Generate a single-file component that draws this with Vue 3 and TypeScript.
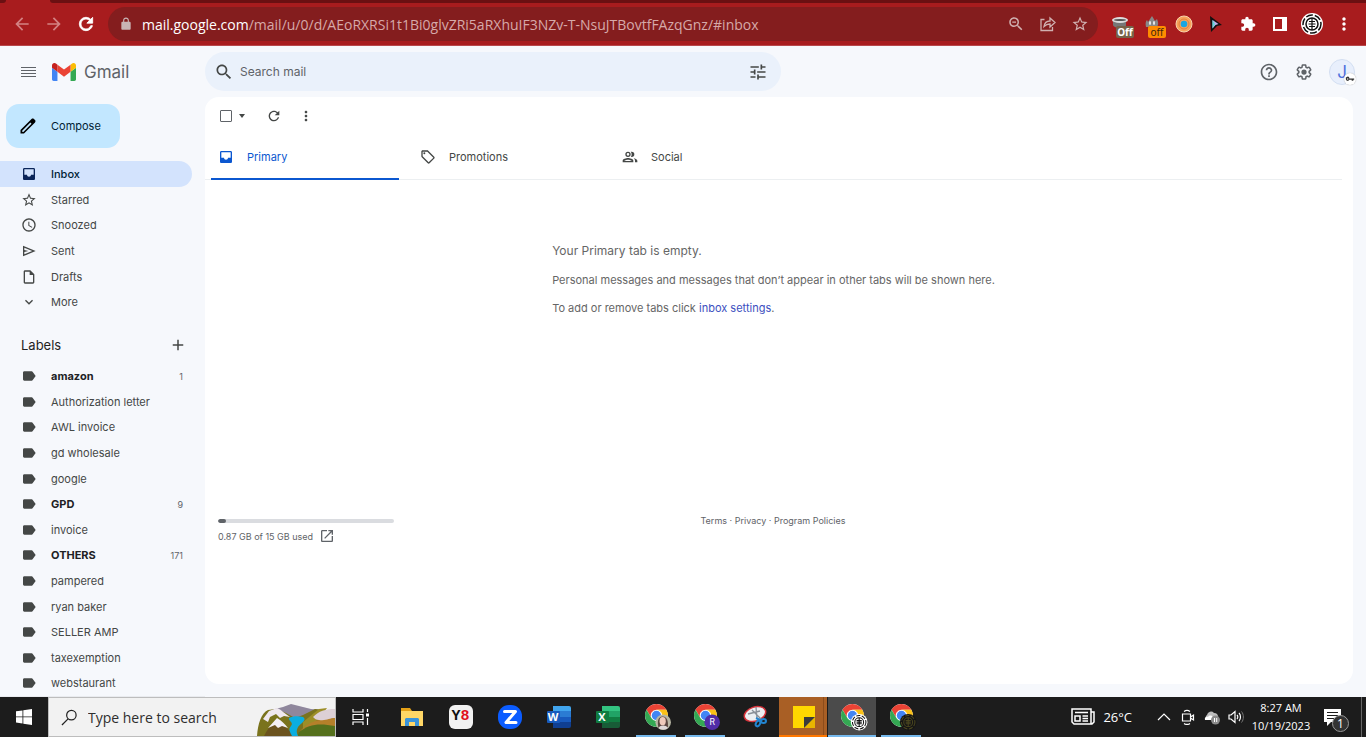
<script setup lang="ts">
import { ref } from 'vue'

interface NavItem { name: string; icon: string; active?: boolean }
interface Label { name: string; count?: number }
interface TaskApp { name: string; kind: string; state?: 'open' | 'active' | 'alert' }

const icons: Record<string, string> = {
  back: 'M20 11H7.83l5.59-5.59L12 4l-8 8 8 8 1.41-1.41L7.83 13H20v-2z',
  forward: 'M4 11h12.17l-5.59-5.59L12 4l8 8-8 8-1.41-1.41L16.17 13H4v-2z',
  reload: 'M17.65 6.35C16.2 4.9 14.21 4 12 4c-4.42 0-7.99 3.58-7.99 8s3.57 8 7.99 8c3.73 0 6.84-2.55 7.73-6h-2.08c-.82 2.33-3.04 4-5.65 4-3.31 0-6-2.69-6-6s2.69-6 6-6c1.66 0 3.14.69 4.22 1.78L13 11h7V4l-2.35 2.35z',
  lock: 'M18 8h-1V6c0-2.76-2.24-5-5-5S7 3.24 7 6v2H6c-1.1 0-2 .9-2 2v10c0 1.1.9 2 2 2h12c1.1 0 2-.9 2-2V10c0-1.1-.9-2-2-2zM9 8V6c0-1.66 1.34-3 3-3s3 1.34 3 3v2H9z',
  zoomOut: 'M15.5 14h-.79l-.28-.27C15.41 12.59 16 11.11 16 9.5 16 5.91 13.09 3 9.5 3S3 5.91 3 9.5 5.91 16 9.5 16c1.61 0 3.09-.59 4.23-1.57l.27.28v.79l5 4.99L20.49 19l-4.99-5zm-6 0C7.01 14 5 11.99 5 9.5S7.01 5 9.5 5 14 7.01 14 9.5 11.99 14 9.5 14zM7 8.8h5v1.5H7z',
  search: 'M15.5 14h-.79l-.28-.27C15.41 12.59 16 11.11 16 9.5 16 5.91 13.09 3 9.5 3S3 5.91 3 9.5 5.91 16 9.5 16c1.61 0 3.09-.59 4.23-1.57l.27.28v.79l5 4.99L20.49 19l-4.99-5zm-6 0C7.01 14 5 11.99 5 9.5S7.01 5 9.5 5 14 7.01 14 9.5 11.99 14 9.5 14z',
  star: 'M22 9.24l-7.19-.62L12 2 9.19 8.63 2 9.24l5.46 4.73L5.82 21 12 17.27 18.18 21l-1.63-7.03L22 9.24zM12 15.4l-3.76 2.27 1-4.28-3.32-2.88 4.38-.38L12 6.1l1.71 4.04 4.38.38-3.32 2.88 1 4.28L12 15.4z',
  puzzle: 'M20.5 11H19V7c0-1.1-.9-2-2-2h-4V3.5C13 2.12 11.88 1 10.5 1S8 2.12 8 3.5V5H4c-1.1 0-1.99.9-1.99 2v3.8H3.5c1.49 0 2.7 1.21 2.7 2.7s-1.21 2.7-2.7 2.7H2V20c0 1.1.9 2 2 2h3.8v-1.5c0-1.49 1.21-2.7 2.7-2.7 1.49 0 2.7 1.21 2.7 2.7V22H17c1.1 0 2-.9 2-2v-4h1.5c1.38 0 2.5-1.12 2.5-2.5S21.88 11 20.5 11z',
  dots: 'M12 8c1.1 0 2-.9 2-2s-.9-2-2-2-2 .9-2 2 .9 2 2 2zm0 2c-1.1 0-2 .9-2 2s.9 2 2 2 2-.9 2-2-.9-2-2-2zm0 6c-1.1 0-2 .9-2 2s.9 2 2 2 2-.9 2-2-.9-2-2-2z',
  tune: 'M3 17v2h6v-2H3zM3 5v2h10V5H3zm10 16v-2h8v-2h-8v-2h-2v6h2zM7 9v2H3v2h4v2h2V9H7zm14 4v-2H11v2h10zm-6-4h2V7h4V5h-4V3h-2v6z',
  help: 'M11 18h2v-2h-2v2zm1-16C6.48 2 2 6.48 2 12s4.48 10 10 10 10-4.48 10-10S17.52 2 12 2zm0 18c-4.41 0-8-3.59-8-8s3.59-8 8-8 8 3.59 8 8-3.59 8-8 8zm0-14c-2.21 0-4 1.79-4 4h2c0-1.1.9-2 2-2s2 .9 2 2c0 2-3 1.75-3 5h2c0-2.25 3-2.5 3-5 0-2.21-1.79-4-4-4z',
  gear: 'M13.85 22.25h-3.7c-.74 0-1.36-.54-1.45-1.27l-.27-1.89c-.27-.14-.53-.29-.79-.46l-1.8.72c-.7.26-1.47-.03-1.81-.65L2.2 15.53c-.35-.66-.2-1.44.36-1.88l1.53-1.19c-.01-.15-.02-.3-.02-.46 0-.15.01-.31.02-.46l-1.52-1.19c-.59-.45-.74-1.26-.37-1.88l1.85-3.19c.34-.62 1.11-.9 1.79-.63l1.81.73c.26-.17.52-.32.78-.46l.27-1.91c.09-.7.71-1.25 1.44-1.25h3.7c.74 0 1.36.54 1.45 1.27l.27 1.89c.27.14.53.29.79.46l1.8-.72c.71-.26 1.48.03 1.82.65l1.84 3.18c.36.66.2 1.44-.36 1.88l-1.52 1.19c.01.15.02.3.02.46s-.01.31-.02.46l1.52 1.19c.56.45.72 1.23.37 1.86l-1.86 3.22c-.34.62-1.11.9-1.8.63l-1.8-.72c-.26.17-.52.32-.78.46l-.27 1.91c-.1.68-.72 1.22-1.46 1.22zm-3.23-2h2.76l.37-2.55.53-.22c.44-.18.88-.44 1.34-.78l.45-.34 2.38.96 1.38-2.4-2.03-1.58.07-.56c.03-.26.06-.51.06-.78s-.03-.53-.06-.78l-.07-.56 2.03-1.58-1.39-2.4-2.39.96-.45-.35c-.42-.32-.87-.58-1.33-.77l-.52-.22-.37-2.55h-2.76l-.37 2.55-.53.21c-.44.19-.88.44-1.34.79l-.45.33-2.38-.95-1.39 2.39 2.03 1.58-.07.56a7 7 0 0 0-.06.79c0 .26.02.53.06.78l.07.56-2.03 1.58 1.38 2.4 2.39-.96.45.35c.43.33.86.58 1.33.77l.53.22.38 2.55zM12 8.5a3.5 3.5 0 1 0 0 7 3.5 3.5 0 0 0 0-7z',
  pencil: 'M20.41 4.94l-1.35-1.35c-.78-.78-2.05-.78-2.83 0L3 16.82V21h4.18L20.41 7.77c.79-.78.79-2.05 0-2.83zm-14 14.12L5 19v-1.36l9.82-9.82 1.41 1.41-9.82 9.83z',
  inbox: 'M19 3H5c-1.1 0-2 .9-2 2v14c0 1.1.9 2 2 2h14c1.1 0 2-.9 2-2V5c0-1.1-.9-2-2-2zm0 10h-4c0 1.66-1.35 3-3 3s-3-1.34-3-3H5V5h14v8z',
  clock: 'M11.99 2C6.47 2 2 6.48 2 12s4.47 10 9.99 10C17.52 22 22 17.52 22 12S17.52 2 11.99 2zM12 20c-4.42 0-8-3.58-8-8s3.58-8 8-8 8 3.58 8 8-3.58 8-8 8zm.5-13H11v6l5.25 3.15.75-1.23-4.5-2.67z',
  send: 'M3 20V4l19 8-19 8zm2-3l11.85-5L5 7v3.5l6 1.5-6 1.5V17z',
  draft: 'M14 2H6c-1.1 0-2 .9-2 2v16c0 1.1.89 2 1.99 2H18c1.1 0 2-.9 2-2V8l-6-6zM6 20V4h7v5h5v11H6z',
  more: 'M16.59 8.59L12 13.17 7.41 8.59 6 10l6 6 6-6z',
  label: 'M17.63 5.84C17.27 5.33 16.67 5 16 5L5 5.01C3.9 5.01 3 5.9 3 7v10c0 1.1.9 1.99 2 1.99L16 19c.67 0 1.27-.33 1.63-.84L22 12l-4.37-6.16z',
  plus: 'M19 13h-6v6h-2v-6H5v-2h6V5h2v6h6v2z',
  tag: 'M21.41 11.58l-9-9C12.05 2.22 11.55 2 11 2H4c-1.1 0-2 .9-2 2v7c0 .55.22 1.05.59 1.42l9 9c.36.36.86.58 1.41.58s1.05-.22 1.41-.59l7-7c.37-.36.59-.86.59-1.41s-.23-1.06-.59-1.42zM13 20.01L4 11V4h7v-.01l9 9-7 7.02zM6.5 5a1.5 1.5 0 1 0 0 3 1.5 1.5 0 0 0 0-3z',
  people: 'M9 4a4 4 0 1 0 0 8 4 4 0 0 0 0-8zm0 2a2 2 0 1 1 0 4 2 2 0 0 1 0-4zM14.5 4c-.5 0-.9.1-1.3.2.8 1 1.3 2.3 1.3 3.8s-.5 2.8-1.3 3.8c.4.1.8.2 1.3.2a4 4 0 0 0 0-8zM9 13.5c-2.7 0-8 1.4-8 4.1V20h16v-2.4c0-2.7-5.3-4.1-8-4.1zM3.500 18c.5-1 3.300-2 5.500-2s5 1 5.500 2zM17.500 13.800c1.200.9 2 2.200 2 3.800V20H23v-2.400c0-2-2.900-3.300-5.500-3.800z',
  external: 'M19 19H5V5h7V3H5c-1.11 0-2 .9-2 2v14c0 1.1.89 2 2 2h14c1.1 0 2-.9 2-2v-7h-2v7zM14 3v2h3.590l-9.830 9.830 1.410 1.410L19 6.410V10h2V3h-7z',
}

const folders: NavItem[] = [
  { name: 'Inbox', icon: 'inbox', active: true },
  { name: 'Starred', icon: 'star' },
  { name: 'Snoozed', icon: 'clock' },
  { name: 'Sent', icon: 'send' },
  { name: 'Drafts', icon: 'draft' },
  { name: 'More', icon: 'more' },
]

const labels: Label[] = [
  { name: 'amazon', count: 1 },
  { name: 'Authorization letter' },
  { name: 'AWL invoice' },
  { name: 'gd wholesale' },
  { name: 'google' },
  { name: 'GPD', count: 9 },
  { name: 'invoice' },
  { name: 'OTHERS', count: 171 },
  { name: 'pampered' },
  { name: 'ryan baker' },
  { name: 'SELLER AMP' },
  { name: 'taxexemption' },
  { name: 'webstaurant' },
]

const tabs = [
  { name: 'Primary', icon: 'inbox' },
  { name: 'Promotions', icon: 'tag' },
  { name: 'Social', icon: 'people' },
]
const activeTab = ref('Primary')
const query = ref('')
const taskQuery = ref('')
const selectAll = ref(false)
const storage = { used: 0.87, total: 15 }

const apps: TaskApp[] = [
  { name: 'Task View', kind: 'taskview' },
  { name: 'File Explorer', kind: 'explorer' },
  { name: 'Y8', kind: 'y8' },
  { name: 'Zoom', kind: 'zoom' },
  { name: 'Word', kind: 'word' },
  { name: 'Excel', kind: 'excel' },
  { name: 'Chrome', kind: 'chrome-photo', state: 'open' },
  { name: 'Chrome R', kind: 'chrome-r', state: 'open' },
  { name: 'Snipping Tool', kind: 'snip' },
  { name: 'Sticky Notes', kind: 'sticky', state: 'alert' },
  { name: 'Chrome Element', kind: 'chrome-white', state: 'active' },
  { name: 'Chrome Dark', kind: 'chrome-black', state: 'open' },
]
</script>

<template>
  <div class="screen">
    <header class="browser">
      <div class="tabstrip"><i class="strip-left"></i><i class="strip-right"></i></div>
      <div class="toolbar">
        <button class="slot dim" aria-label="Back"><svg class="i20" viewBox="0 0 24 24"><path :d="icons.back" /></svg></button>
        <button class="slot dim" aria-label="Forward"><svg class="i20" viewBox="0 0 24 24"><path :d="icons.forward" /></svg></button>
        <button class="slot" aria-label="Reload"><svg class="i20 bold" viewBox="0 0 24 24"><path :d="icons.reload" /></svg></button>
        <div class="omnibox">
          <svg class="i14 lock" viewBox="0 0 24 24"><path :d="icons.lock" /></svg>
          <div class="url" role="textbox" aria-label="Address"><b>mail.google.com</b>/mail/u/0/d/AEoRXRSi1t1Bi0glvZRi5aRXhuIF3NZv-T-NsuJTBovtfFAzqGnz/#inbox</div>
          <button class="slot pale" aria-label="Zoom"><svg class="i18" viewBox="0 0 24 24"><path :d="icons.zoomOut" /></svg></button>
          <button class="slot pale" aria-label="Share">
            <svg class="i18" viewBox="0 0 18 18"><path class="line" d="M5.500 4.500H2v11h11.500V12M5 11.500C5.500 8 8 6 11 6V3l5 4.500-5 4.500V9C8.500 9 6.500 10 5 11.500z" /></svg>
          </button>
          <button class="slot pale" aria-label="Bookmark"><svg class="i18" viewBox="0 0 24 24"><path :d="icons.star" /></svg></button>
        </div>
        <div class="extensions">
          <button class="slot badged" aria-label="Blocker off">
            <svg class="i20" viewBox="0 0 20 20"><path d="M3 6v5c1 4 13 4 13 0V6z" fill="#777" /><ellipse cx="10" cy="6" rx="8" ry="3" fill="#ddd" /><ellipse cx="10" cy="6" rx="6" ry="1" fill="#555" /></svg>
            <span class="badge brown">Off</span>
          </button>
          <button class="slot badged" aria-label="Ghost off">
            <svg class="i20" viewBox="0 0 20 20"><path d="M4 13c-1-4 0-6 1-7l1 2 4-6 3 5 2-2c1 3 2 5 0 8z" fill="#888" /><ellipse cx="8" cy="9" rx="1" ry="2" fill="#eee" /><ellipse cx="12" cy="9" rx="1" ry="2" fill="#eee" /></svg>
            <span class="badge orange">off</span>
          </button>
          <button class="slot" aria-label="Target extension">
            <svg class="i18" viewBox="0 0 18 18"><circle cx="9" cy="9" r="8" fill="#f7a35b" stroke="#f8d4ac" /><circle cx="9" cy="9" r="5" fill="none" stroke="#e0803c" /><circle cx="9" cy="9" r="3.300" fill="#17a6e2" /></svg>
          </button>
          <button class="slot" aria-label="Cursor extension">
            <svg class="i18" viewBox="0 0 18 18"><path d="M3 1l12 9-5 1-6 6z" fill="#111" /><path d="M5.500 5l6 4-3 1-3 3.500z" fill="#c5b0ee" /><path d="M5.500 5v8.500L8 9z" fill="#62dbd9" /></svg>
          </button>
          <button class="slot" aria-label="Extensions"><svg class="i16" viewBox="0 0 24 24"><path :d="icons.puzzle" /></svg></button>
          <button class="slot" aria-label="Side panel"><svg class="i14" viewBox="0 0 14 14"><path fill-rule="evenodd" d="M0 0h14v14H0zM2 2v10h7V2z" /></svg></button>
          <button class="slot" aria-label="Profile">
            <svg class="i22" viewBox="0 0 22 22"><circle cx="11" cy="11" r="11" fill="#fff" /><circle cx="11" cy="11" r="9" fill="none" stroke="#111" stroke-width="1.500" stroke-dasharray="7 2" /><circle cx="11" cy="11" r="6" fill="none" stroke="#111" stroke-width="1.500" /><path d="M11 5v12M8 8.500h6M7.500 11h7M8 13.500h6" stroke="#111" stroke-width="1.200" /></svg>
          </button>
          <button class="slot" aria-label="Menu"><svg class="i20" viewBox="0 0 24 24"><path :d="icons.dots" /></svg></button>
        </div>
      </div>
    </header>

    <div class="gmail">
      <div class="topbar">
        <div class="brand">
          <button class="menu" aria-label="Main menu"><svg class="i16" viewBox="0 0 16 16"><path d="M0 3h15v1H0zM0 6h15v1H0zM0 9h15v1H0zM0 12h15v1H0z" /></svg></button>
          <a class="logo" href="#inbox">
            <svg viewBox="52 42 88 66"><path fill="#4285f4" d="M58 108h14V74L52 59v43c0 3.320 2.690 6 6 6" /><path fill="#34a853" d="M120 108h14c3.320 0 6-2.690 6-6V59l-20 15" /><path fill="#fbbc04" d="M120 48v26l20-15v-8c0-7.420-8.470-11.650-14.400-7.200" /><path fill="#ea4335" d="M72 74V48l24 18 24-18v26L96 92" /><path fill="#c5221f" d="M52 51v8l20 15V48l-5.600-4.200c-5.940-4.450-14.400-.22-14.400 7.200" /></svg>
            <span>Gmail</span>
          </a>
        </div>
        <form class="search" role="search" @submit.prevent>
          <button class="plain" aria-label="Search"><svg class="i20" viewBox="0 0 24 24"><path :d="icons.search" /></svg></button>
          <input v-model="query" type="text" placeholder="Search mail" aria-label="Search mail" />
          <button class="plain" type="button" aria-label="Search options"><svg class="i20" viewBox="0 0 24 24"><path :d="icons.tune" /></svg></button>
        </form>
        <div class="account">
          <button class="tool" aria-label="Support"><svg class="i20" viewBox="0 0 24 24"><path :d="icons.help" /></svg></button>
          <button class="tool" aria-label="Settings"><svg class="i18" viewBox="0 0 24 24"><path :d="icons.gear" /></svg></button>
          <button class="avatar" aria-label="Account">J
            <span class="key"><svg viewBox="0 0 12 12"><path d="M1 6a2.200 2.200 0 1 1 4.300-.7H11V7h-1v1H8V7H5.200A2.200 2.200 0 0 1 1 6zm1.500 0a.8.8 0 1 0 1.600 0 .8.8 0 0 0-1.600 0z" /></svg></span>
          </button>
        </div>
      </div>

      <div class="body">
        <aside class="side">
          <button class="compose"><svg class="i20" viewBox="0 0 24 24"><path :d="icons.pencil" /></svg>Compose</button>
          <ul class="rows">
            <li v-for="f in folders" :key="f.name">
              <a href="#inbox" class="row" :class="{ active: f.active }"><svg class="i16" viewBox="0 0 24 24"><path :d="icons[f.icon]" /></svg><span>{{ f.name }}</span></a>
            </li>
          </ul>
          <div class="labels-head"><h2>Labels</h2><button class="plain" aria-label="Create new label"><svg class="i18" viewBox="0 0 24 24"><path :d="icons.plus" /></svg></button></div>
          <ul class="rows">
            <li v-for="l in labels" :key="l.name">
              <a href="#label" class="row" :class="{ unread: l.count }"><svg class="i16" viewBox="0 0 24 24"><path :d="icons.label" /></svg><span>{{ l.name }}</span><em v-if="l.count">{{ l.count }}</em></a>
            </li>
          </ul>
        </aside>

        <main class="panel">
          <div class="actions">
            <label class="check"><input v-model="selectAll" type="checkbox" aria-label="Select all" /></label>
            <button class="caret" aria-label="Select"><svg viewBox="0 0 8 4"><path d="M1 0h6L4 4z" /></svg></button>
            <button class="action" aria-label="Refresh"><svg class="i16" viewBox="0 0 24 24"><path :d="icons.reload" /></svg></button>
            <button class="action" aria-label="More"><svg class="i16" viewBox="0 0 24 24"><path :d="icons.dots" /></svg></button>
          </div>
          <div class="tabs" role="tablist">
            <button v-for="t in tabs" :key="t.name" class="tab" role="tab" :aria-selected="activeTab === t.name" :class="{ on: activeTab === t.name }" @click="activeTab = t.name">
              <svg class="i16" viewBox="0 0 24 24"><path :d="icons[t.icon]" /></svg>{{ t.name }}
            </button>
          </div>
          <section class="empty">
            <div>
              <p class="lead">Your Primary tab is empty.</p>
              <p>Personal messages and messages that don’t appear in other tabs will be shown here.</p>
              <p>To add or remove tabs click <a href="#settings">inbox settings</a>.</p>
            </div>
          </section>
          <footer class="foot">
            <div class="storage">
              <div class="meter"><i :style="{ width: (storage.used / storage.total * 80) + '%' }"></i></div>
              <a href="#storage">{{ storage.used }} GB of {{ storage.total }} GB used <svg class="i16" viewBox="0 0 24 24"><path :d="icons.external" /></svg></a>
            </div>
            <div class="legal"><a href="#terms">Terms</a> · <a href="#privacy">Privacy</a> · <a href="#policies">Program Policies</a></div>
          </footer>
        </main>
      </div>
    </div>

    <footer class="taskbar">
      <button class="start" aria-label="Start"><svg class="i16" viewBox="0 0 16 16"><path d="M0 2.300l6.500-.9v6.100H0zM7.300 1.300L16 0v7.500H7.300zM0 8.300h6.500v6.200L0 13.600zM7.300 8.300H16V16l-8.700-1.300z" /></svg></button>
      <label class="tasksearch">
        <svg class="glass" viewBox="0 0 18 18"><circle cx="11" cy="6.500" r="5" /><path d="M7.500 10.500L1 17" /></svg>
        <input v-model="taskQuery" type="text" placeholder="Type here to search" aria-label="Type here to search" />
        <svg class="scene" viewBox="0 0 78 32">
          <path d="M14 6l12-3 8-3 8 2 12 3 10 1 8 5v6H14z" fill="#8f879c" />
          <path d="M0 32C1 20 4 9 11 6l8-1 10 4 9 5 8-3 12-6 10 1 10 4v22z" fill="#7a731d" />
          <path d="M46 18L62 5l8-1-6 8-18 18z" fill="#9c8e27" />
          <path d="M40 32c6-12 20-18 38-18v18z" fill="#b5802a" />
          <path d="M42 28c10-8 20-9 36-6v10H40z" fill="#55701c" />
          <path d="M56 13c6-6 12-8 22-8v9c-6 0-8 3-16 2-3 0-4-1-6-3z" fill="#ddd0d6" />
          <path d="M6 15l6-8 8-3c5 2 8 6 13 9l-6-1-4 2-4-4-6 3-2 5z" fill="#efe8ef" />
          <path d="M7 32c4-8 8-12 13-17 6 6 12 10 17 17z" fill="#6b531e" />
          <path d="M11 24l9-10c5 3 8 6 11 10l-6-2-4 2-3-3z" fill="#f4f0f5" />
          <path d="M46 13c-5-1-10-1-14 1-1 3 5 4 2 8-3 3-1 6 1 10h6c-3-6 0-10 4-13 2-2 4-4 1-6z" fill="#0aaee0" />
        </svg>
      </label>
      <nav class="apps">
        <button v-for="a in apps" :key="a.name" class="app" :class="a.state" :aria-label="a.name">
          <svg v-if="a.kind === 'taskview'" class="i18" viewBox="0 0 18 18"><path class="tline" d="M1 1v3h10V1M1 17v-3h10v3M1 6.500h10v5H1zM15.500 1v3M15.500 10v7" /><path d="M14 5.500h3v3h-3z" fill="#fff" /></svg>
          <svg v-else-if="a.kind === 'explorer'" class="i24" viewBox="0 0 24 24"><path d="M1 3h9l2 3h11v14H1z" fill="#e5a117" /><path d="M1 6h22v15H1z" fill="#ffd766" /><path d="M5 21v-7l1-1h12l1 1v7h-4v-4H9v4z" fill="#3b94d9" /></svg>
          <span v-else-if="a.kind === 'y8'" class="tile y8">Y<b>8</b></span>
          <svg v-else-if="a.kind === 'zoom'" class="i24" viewBox="0 0 24 24"><rect width="24" height="24" rx="11" fill="#0b5cff" /><path d="M6.500 6.500h11L8 17.500h10" fill="none" stroke="#fff" stroke-width="3" stroke-linejoin="round" stroke-linecap="round" /></svg>
          <span v-else-if="a.kind === 'word'" class="office word"><b>W</b></span>
          <span v-else-if="a.kind === 'excel'" class="office excel"><b>X</b></span>
          <svg v-else-if="a.kind === 'snip'" class="i24" viewBox="0 0 24 24"><ellipse cx="12" cy="9" rx="11" ry="7" transform="rotate(-18 12 9)" fill="#eceff2" stroke="#d6323a" stroke-width="1.500" /><path d="M5 9l12-3M13 2l1 12M9 5l9 9" stroke="#8a9098" stroke-width="1.300" /><g fill="none" stroke="#2385d0" stroke-width="2"><ellipse cx="15" cy="18.500" rx="2" ry="3" transform="rotate(30 15 18.500)" /><ellipse cx="20.500" cy="16" rx="2.500" ry="2" /><path d="M13 13l6 3" /></g></svg>
          <svg v-else-if="a.kind === 'sticky'" class="i22" viewBox="0 0 22 22"><path d="M0 0h22v22H0z" fill="#ffd700" /><path d="M22 11v11H11z" fill="#e9b500" /><path d="M11 11h11L11 22z" fill="#3b3b3b" /></svg>
          <svg v-else class="chrome" viewBox="0 0 54 54">
            <circle cx="24" cy="24" r="22" fill="#fff" />
            <path fill="#ea4335" d="M4.950 13A22 22 0 0 1 43.050 13H24A11 11 0 0 0 14.470 29.500z" />
            <path fill="#fbc116" d="M43.050 13A22 22 0 0 1 24 46L33.530 29.500A11 11 0 0 0 24 13z" />
            <path fill="#34a853" d="M24 46A22 22 0 0 1 4.950 13L14.470 29.500A11 11 0 0 0 33.530 29.500z" />
            <circle cx="24" cy="24" r="9" fill="#4285f4" />
            <g v-if="a.kind === 'chrome-photo'"><circle cx="37" cy="37" r="15" fill="#b7b6a4" /><path d="M28 48c-3-12-1-22 8-22s11 10 10 21z" fill="#5a4640" /><ellipse cx="36" cy="35" rx="6" ry="8" fill="#eecabb" /><path d="M28 48c4-6 14-6 18 0-5 4-13 4-18 0z" fill="#ded8d8" /></g>
            <g v-else-if="a.kind === 'chrome-r'"><circle cx="37" cy="37" r="15" fill="#512da8" /><text x="37" y="43" text-anchor="middle" fill="#fff" font-size="17" font-family="Roboto, sans-serif">R</text></g>
            <g v-else :class="a.kind"><circle class="disc" cx="37" cy="37" r="16" /><g class="marks"><circle cx="37" cy="37" r="13" stroke-dasharray="8 3" /><circle cx="37" cy="37" r="8.500" /><path d="M37 29v16M32 34h10M32 37h10M32 40h10" /></g></g>
          </svg>
        </button>
      </nav>
      <div class="tray">
        <button class="weather"><svg viewBox="0 0 24 18" stroke="#fff" stroke-width="1.500"><path d="M1 1h19v15H3l-2-2zM20 4h3v10l-2 2h-2M4 4.500h13M4 8h5v5H4zM11.500 8H17M11.500 10.500H17M11.500 13H17" /></svg>26°C</button>
        <button class="trayicon" aria-label="Show hidden icons"><svg class="i14" viewBox="0 0 14 14"><path class="tline" d="M1 10l6-6 6 6" /></svg></button>
        <button class="trayicon" aria-label="Meet Now"><svg class="i16" viewBox="0 0 16 16"><path class="tline" d="M2.500 5h8v7h-8zM10.500 8l3-2v5l-3-2M4 2.500c2-1.500 4-1.500 6 0M4 14.500c2 1.300 4 1.300 6 0" /></svg></button>
        <button class="trayicon" aria-label="OneDrive"><svg class="i16" viewBox="0 0 16 16"><path d="M3 11a3 3 0 0 1 0-5 4 4 0 0 1 7-2 4 4 0 0 1 4 4v3z" fill="#bdbdbd" /><path d="M1 11c-1-3 2-4 3-3 2-3 6-1 6 3z" fill="#fff" /><circle cx="11.500" cy="11" r="4.500" fill="#8b8b8b" /><path d="M10.500 9v4M12.700 9v4" stroke="#fff" /></svg></button>
        <button class="trayicon" aria-label="Volume"><svg class="i16" viewBox="0 0 16 16"><path class="tline" d="M1 6h2l4-3.500v11L3 10H1zM9 6c1 1 1 3 0 4M11 4c2 2 2 6 0 8" /><path d="M13.500 2.500c2.500 3 2.500 8 0 11" fill="none" stroke="#777" /></svg></button>
        <button class="datetime"><time>8:27 AM</time><time>10/19/2023</time></button>
        <button class="notice" aria-label="Notifications"><svg viewBox="0 0 17 17"><path d="M0 0h17v13H7l-4 4v-4H0z" fill="#fff" /><path d="M3 3.500h11M3 6.500h11M3 9.500h7" stroke="#1c1c1c" /></svg><span>1</span></button>
        <i class="peek"></i>
      </div>
    </footer>
  </div>
</template>

<style>
html, body { margin: 0; }
</style>

<style scoped>
* { box-sizing: border-box; }
.screen { display: flex; flex-direction: column; height: 100vh; overflow: hidden; font-family: Inter, Roboto, "Liberation Sans", sans-serif; font-size: 11px; color: #444746; background: #f6f8fc; }
button { border: 0; padding: 0; margin: 0; background: none; font: inherit; color: inherit; display: flex; align-items: center; justify-content: center; }
a { color: inherit; text-decoration: none; }
svg { fill: currentColor; flex: none; display: block; }
ul { list-style: none; margin: 0; padding: 0; }
input { font: inherit; border: 0; outline: 0; background: none; padding: 0; min-width: 0; }
.i14 { width: 14px; height: 14px; }
.i16 { width: 16px; height: 16px; }
.i18 { width: 18px; height: 18px; }
.i20 { width: 20px; height: 20px; }
.i22 { width: 22px; height: 22px; }
.i24 { width: 24px; height: 24px; }

.browser { background: #a81c1e; color: #fff; flex: none; border-bottom: 1px solid #b8474b; }
.tabstrip { display: flex; height: 3px; justify-content: space-between; }
.strip-left { width: 6px; background: #6b1012; border-bottom-right-radius: 3px; }
.strip-right { flex: 1; margin-left: 44px; background: #6b1012; border-bottom-left-radius: 3px; }
.toolbar { display: flex; align-items: center; height: 42px; padding: 0 6px; }
.slot { width: 32px; height: 32px; flex: none; }
.dim { color: #d38283; }
.bold path { stroke: #fff; }
.omnibox { display: flex; align-items: center; flex: 1; min-width: 0; height: 34px; margin: 0 6px; padding: 0 2px 0 11px; border-radius: 17px; background: #841d1e; }
.lock { color: #c9b4b4; }
.url { flex: 1; min-width: 0; margin-left: 9px; overflow: hidden; white-space: nowrap; font-family: "Open Sans", "Noto Sans", sans-serif; font-size: 14px; color: #d6a9a9; }
.url b { font-weight: 400; color: #fff; }
.pale { color: #d0b0b0; }
.line { fill: none; stroke: currentColor; stroke-width: 1.300; }
.extensions { display: flex; }
.badged { position: relative; }
.badge { position: absolute; left: 12px; top: 18px; height: 12px; width: 18px; border-radius: 2px; font: 700 10px/12px "Noto Sans", sans-serif; text-align: center; }
.brown { background: #77634a; color: #fff; }
.orange { background: #ff8c00; color: #3d2410; font-weight: 400; }

.gmail { display: flex; flex-direction: column; flex: 1; min-height: 0; }
.topbar { display: flex; align-items: center; height: 51px; flex: none; }
.brand { display: flex; align-items: center; width: 205px; flex: none; padding-left: 21px; }
.menu { width: 16px; height: 24px; color: #5f6368; }
.logo { display: flex; align-items: center; gap: 8px; margin-left: 15px; font-size: 17px; color: #5f6368; }
.logo svg { width: 24px; height: 18px; }
.search { display: flex; align-items: center; flex: 0 1 576px; height: 39px; padding: 0 13px 0 9px; border-radius: 20px; background: #eaf1fb; }
.search input { flex: 1; margin-left: 6px; font-size: 12px; }
.search input::placeholder { color: #5f6368; opacity: 1; }
.account { display: flex; align-items: center; margin-left: auto; padding-right: 11px; color: #5f6368; }
.tool { width: 35px; height: 35px; }
.avatar { position: relative; width: 26px; height: 26px; margin-left: 8px; border-radius: 50%; border: 1px solid #d3dff2; background: #e8effc; color: #4c6fdc; font-size: 17px; }
.key { position: absolute; right: -2px; bottom: -1px; width: 12px; height: 12px; border-radius: 50%; background: #fff; color: #333; box-shadow: 0 0 1px #999; display: flex; align-items: center; justify-content: center; }
.key svg { width: 10px; height: 10px; }

.body { display: flex; flex: 1; min-height: 0; }
.side { width: 205px; flex: none; padding-top: 7px; overflow: hidden; border-bottom: 1px solid #e9ebef; }
.compose { width: 114px; height: 44px; margin: 0 0 13px 6px; padding-left: 12px; gap: 13px; justify-content: flex-start; border-radius: 13px; background: #c2e7ff; color: #001d35; }
.compose svg { color: #000; }
.rows { display: grid; grid-auto-rows: 26px 25px 26px 26px 25px; }
.row { display: flex; align-items: center; height: 100%; width: 192px; padding: 0 9px 0 21px; border-radius: 0 13px 13px 0; }
.row span { margin-left: 14px; flex: 1; }
.row em { font-style: normal; font-weight: 400; font-size: 9px; color: #5f6368; }
.active { background: #d3e3fd; color: #001d35; font-weight: 500; }
.active svg { color: #0b2559; }
.unread { color: #202124; font-weight: 700; }
.unread svg { color: #444746; }
.labels-head { display: flex; align-items: center; justify-content: space-between; height: 26px; margin: 17px 18px 5px 21px; color: #444746; }
.labels-head h2 { margin: 0; font-size: 13px; font-weight: 400; color: #1f1f1f; }

.panel { display: flex; flex-direction: column; flex: 1; min-width: 0; margin: 0 13px 13px 0; border-radius: 14px; background: #fff; }
.actions { display: flex; align-items: center; height: 38px; padding-left: 15px; }
.check { display: flex; }
.check input { appearance: none; width: 12px; height: 12px; margin: 0; border: 1px solid #5f6368; border-radius: 1px; outline: 0; }
.check input:checked { background: #0b57d0; }
.caret { width: 20px; height: 20px; }
.caret svg { width: 8px; height: 4px; }
.action { width: 32px; height: 32px; }
.caret + .action { margin-left: 6px; }
.tabs { display: flex; height: 45px; padding-left: 6px; margin-right: 11px; border-bottom: 1px solid #eceff1; }
.tab { width: 188px; height: 45px; margin-right: 14px; padding-left: 7px; gap: 13px; justify-content: flex-start; border-bottom: 2px solid transparent; }
.tab.on { color: #0b57d0; border-color: #0b57d0; }
.empty { display: flex; justify-content: center; padding: 61px 11px 0 0; color: #666; }
.empty p { margin: 0 0 8px; line-height: 20px; }
.empty .lead { margin-bottom: 9px; font-size: 12px; }
.empty a { color: #3c4fc0; }
.foot { display: grid; grid-template-columns: 1fr 1fr 1fr; align-items: start; margin: 188px 25px 0 13px; font-size: 9px; color: #5f6368; }
.meter { width: 176px; height: 4px; margin-top: 5px; border-radius: 2px; background: #dadce0; overflow: hidden; }
.meter i { display: block; height: 4px; min-width: 8px; border-radius: 2px; background: #5f6368; }
.storage a { display: flex; align-items: center; gap: 6px; margin-top: 5px; }
.legal { text-align: center; line-height: 14px; }

.taskbar { display: flex; height: 40px; flex: none; background: #1c1c1c; color: #fff; font-family: "Open Sans", "Noto Sans", sans-serif; }
.start { width: 48px; }
.tasksearch { display: flex; align-items: center; position: relative; width: 288px; padding-left: 12px; border: 1px solid #bdbdbd; background: #f2f2f2; }
.glass { width: 17px; height: 17px; fill: none; stroke: #222; stroke-width: 1.300; }
.tasksearch input { width: 160px; margin-left: 10px; font-size: 14px; }
.tasksearch input::placeholder { color: #2e2e2e; opacity: 1; }
.scene { position: absolute; right: 0; bottom: 0; width: 78px; height: 32px; }
.apps { display: flex; }
.app { width: 49px; position: relative; }
.app:first-child { margin-right: 2px; }
.app.open::after, .app.active::after, .app.alert::after { content: ""; position: absolute; bottom: 0; left: 4px; right: 5px; height: 2px; background: #76b9ed; }
.app.active { background: linear-gradient(90deg, #4b4b4b 48px, #1c1c1c 48px); }
.app.active::after { left: 0; right: 1px; }
.app.alert { background: linear-gradient(90deg, #a95f25 44px, #8c4c1b 44px, #8c4c1b 45px, #a95f25 45px, #a95f25 48px, #1c1c1c 48px); }
.app.alert::after { left: 0; right: 1px; background: #ff7800; }
.chrome { width: 28px; height: 28px; margin-left: 2px; }
.chrome-white .disc { fill: #fff; }
.chrome-black .disc { fill: #151515; }
.marks { fill: none; stroke: #111; stroke-width: 2; }
.chrome-black .marks { stroke: #4a461f; }
.tile { width: 24px; height: 24px; border-radius: 6px; background: #f1f1f1; color: #111; font: 700 15px/24px "Liberation Mono", monospace; }
.tile b { color: #e0101b; }
.office { width: 24px; height: 22px; padding: 5px 0 0; border-radius: 2px; display: block; }
.office b { display: block; width: 13px; height: 12px; border-radius: 1px; font: 700 11px/12px "Open Sans", sans-serif; text-align: center; }
.word { background: linear-gradient(#41a5ee 25%, #2b7cd3 25%, #2b7cd3 50%, #185abd 50%, #185abd 75%, #103f91 75%) right / 18px 100% no-repeat; }
.word b { background: #185abd; }
.excel { background: linear-gradient(#33c481 25%, #21a366 25%, #21a366 50%, #107c41 50%, #107c41 75%, #185c37 75%) right / 18px 100% no-repeat; }
.excel b { background: #107c41; }
.tray { display: flex; margin-left: auto; }
.weather { gap: 8px; font-size: 13px; margin-right: 20px; }
.weather svg { width: 24px; height: 18px; fill: none; }
.trayicon { width: 24px; }
.tline { fill: none; stroke: #fff; stroke-width: 1.200; }
.datetime { flex-direction: column; width: 66px; font-size: 11px; line-height: 18px; }
.notice { position: relative; width: 47px; }
.notice svg { width: 17px; height: 17px; margin-right: 11px; }
.notice span { position: absolute; left: 18px; top: 18px; width: 17px; height: 17px; border: 1px solid #999; border-radius: 50%; background: #333; font-size: 12px; line-height: 15px; text-align: center; }
.peek { width: 5px; border-left: 1px solid #666; }
</style>
